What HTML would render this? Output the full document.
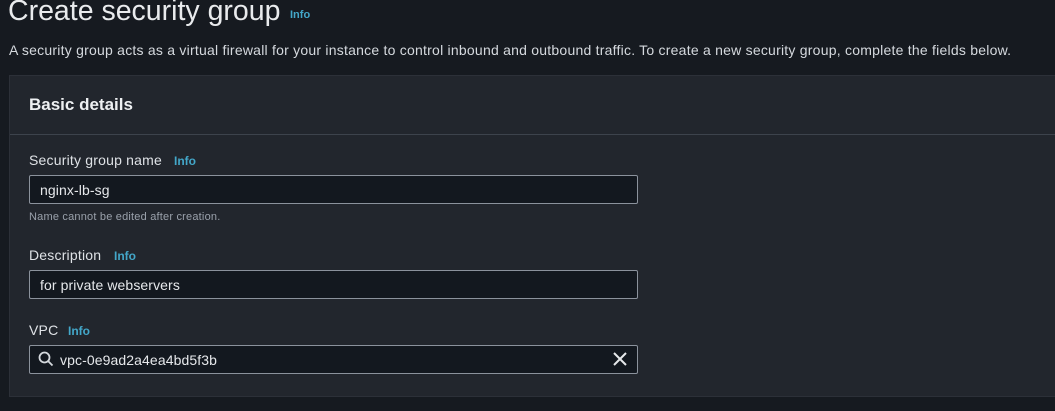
<!DOCTYPE html>
<html><head><meta charset="utf-8"><style>
body{margin:0;width:1055px;height:411px;background:#161a20;font-family:"Liberation Sans",sans-serif;color:#d1d5db;position:relative;overflow:hidden}
.a{position:absolute;white-space:nowrap}
.info{color:#43a7c9;font-weight:bold;font-size:12px}
.panel{position:absolute;left:9px;top:75px;width:1060px;height:320px;background:#22262d;border:1px solid #2c3038}
.hdr{position:absolute;left:0;top:0;right:0;height:58px;border-bottom:1px solid #3d434c}
.inp{position:absolute;left:29px;width:607px;height:27px;background:#13181f;border:1px solid #8b929c;border-radius:2px}
.lbl{font-size:14px;color:#dfe2e6;letter-spacing:0.2px}
.val{font-size:14px;color:#e6e8eb;letter-spacing:0.1px}
</style></head><body>
<div class="a" style="left:8px;top:-5px;font-size:28.5px;color:#e9ebed">Create security group</div>
<div class="a info" style="left:290px;top:9px;font-size:11px">Info</div>
<div class="a" style="left:9px;top:42px;font-size:14px;color:#d5d9de;letter-spacing:0.23px">A security group acts as a virtual firewall for your instance to control inbound and outbound traffic. To create a new security group, complete the fields below.</div>
<div class="panel"><div class="hdr"></div></div>
<div class="a" style="left:29px;top:95px;font-size:17px;font-weight:bold;color:#eef0f2">Basic details</div>
<div class="a lbl" style="left:29px;top:152px">Security group name</div>
<div class="a info" style="left:174px;top:154px">Info</div>
<div class="inp" style="top:175px"></div>
<div class="a val" style="left:40px;top:182px">nginx-lb-sg</div>
<div class="a" style="left:29px;top:211px;font-size:11px;color:#9aa1ab;letter-spacing:0.2px">Name cannot be edited after creation.</div>
<div class="a lbl" style="left:29px;top:247px">Description</div>
<div class="a info" style="left:114px;top:249px">Info</div>
<div class="inp" style="top:270px"></div>
<div class="a val" style="left:40px;top:277px">for private webservers</div>
<div class="a lbl" style="left:29px;top:322px">VPC</div>
<div class="a info" style="left:68px;top:324px">Info</div>
<div class="inp" style="top:345px"></div>
<svg class="a" style="left:38px;top:351px" width="16" height="16" viewBox="0 0 16 16"><circle cx="6.5" cy="6.5" r="5" fill="none" stroke="#d5d9de" stroke-width="1.8"/><line x1="10" y1="10" x2="14.5" y2="14.5" stroke="#d5d9de" stroke-width="1.8"/></svg>
<div class="a val" style="left:60px;top:352px">vpc-0e9ad2a4ea4bd5f3b</div>
<svg class="a" style="left:613px;top:352px" width="14" height="14" viewBox="0 0 14 14"><path d="M1 1L13 13M13 1L1 13" stroke="#e6e8eb" stroke-width="2"/></svg>
</body></html>
